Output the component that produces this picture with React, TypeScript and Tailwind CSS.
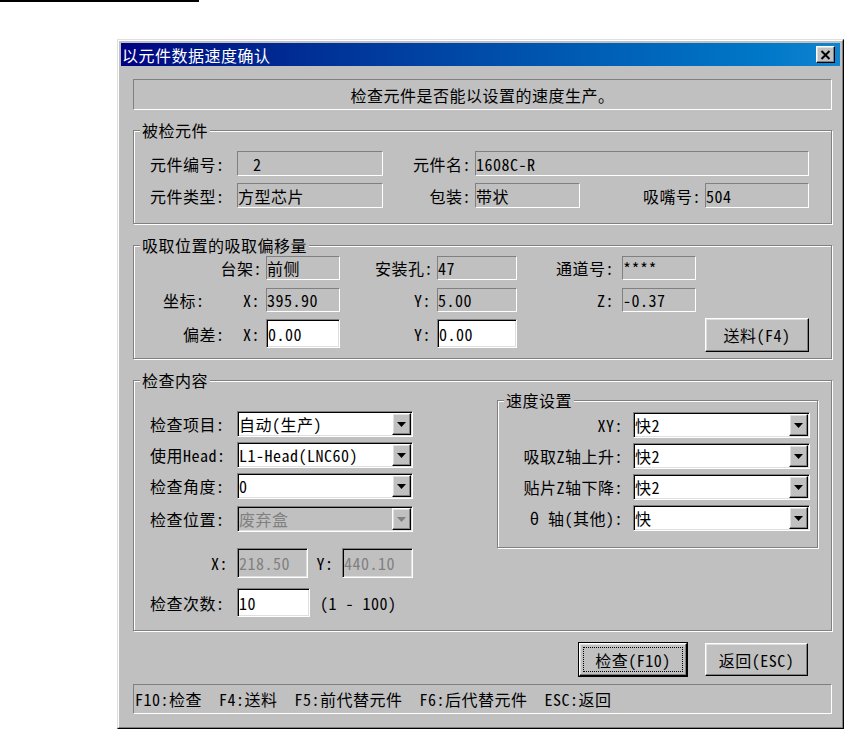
import type { ReactNode } from "react"

const raised =
  "border border-t-white border-l-white border-r-black border-b-black shadow-[inset_-1px_-1px_0_#808080,inset_1px_1px_0_#dfdfdf]"
const sunken =
  "border border-t-[#808080] border-l-[#808080] border-r-white border-b-white shadow-[inset_1px_1px_0_#000,inset_-1px_-1px_0_#dfdfdf]"
const staticEdge = "border border-t-[#808080] border-l-[#808080] border-r-white border-b-white"
const etched = "border border-[#808080] shadow-[inset_1px_1px_0_#fff,1px_1px_0_#fff]"

function Group({ title, className, children }: { title: string; className?: string; children: ReactNode }) {
  return (
    <div className={`relative ${etched} ${className ?? ""}`}>
      <span className="absolute -top-[11px] left-[6px] bg-[#c0c0c0] px-[2px] leading-[20px]">{title}</span>
      {children}
    </div>
  )
}

function Field({ value, className }: { value: string; className?: string }) {
  return <div className={`flex h-full items-center whitespace-pre ${staticEdge} ${className ?? ""}`}>{value}</div>
}

function Edit({ value, className, disabled }: { value: string; className?: string; disabled?: boolean }) {
  return (
    <div
      className={`flex items-center pl-[1px] ${sunken} ${disabled ? "bg-[#c0c0c0] text-[#808080]" : "bg-white"} ${className ?? ""}`}
    >
      {value}
    </div>
  )
}

function Combo({ value, className, disabled }: { value: string; className?: string; disabled?: boolean }) {
  return (
    <div
      className={`flex h-[26px] p-[1px] ${sunken} ${disabled ? "bg-[#c0c0c0] text-[#808080]" : "bg-white"} ${className ?? ""}`}
    >
      <span className="flex flex-1 items-center whitespace-nowrap">{value}</span>
      <div className={`flex w-[19px] items-center justify-center bg-[#c0c0c0] ${raised}`}>
        <svg width="9" height="5" viewBox="0 0 9 5">
          <path d="M0 0h9L4.5 5z" fill={disabled ? "#808080" : "#000"} />
        </svg>
      </div>
    </div>
  )
}

export default function App() {
  return (
    <div className="relative h-[730px] w-[846px] overflow-hidden bg-white text-[16px] leading-[20px] tracking-[0.5px] text-black [font-family:'Noto_Sans_Mono_CJK_SC','Noto_Sans_CJK_SC',sans-serif]">
      <div className="h-[2px] w-[199px] bg-black" />

      {/* dialog */}
      <div className="mt-[37px] ml-[117px] h-[690px] w-[727px] border border-t-[#dfdfdf] border-l-[#dfdfdf] border-r-black border-b-black bg-[#c0c0c0]">
        <div className="flex h-full flex-col border border-t-white border-l-white border-r-[#808080] border-b-[#808080] p-[2px]">
          {/* title bar */}
          <div className="flex h-[23px] items-center justify-between bg-linear-to-r from-[#000080] to-[#1084d0] pr-[5px] pl-[1px]">
            <span className="text-white">以元件数据速度确认</span>
            <div className={`flex h-[17px] w-[19px] items-center justify-center bg-[#c0c0c0] ${raised}`}>
              <svg width="11" height="10" viewBox="0 0 11 10">
                <path d="M1.5 1l8 8M9.5 1l-8 8" stroke="#000" strokeWidth="2" />
              </svg>
            </div>
          </div>

          <div className="flex flex-col pr-[8px] pl-[12px]">
            {/* message */}
            <div className={`mt-[13px] flex h-[31px] items-center justify-center ${staticEdge}`}>
              检查元件是否能以设置的速度生产。
            </div>

            {/* 被检元件 */}
            <Group title="被检元件" className="mt-[20px] h-[94px]">
              <div className="flex flex-col gap-[7px] pt-[20px]">
                <div className="flex h-[25px] items-center">
                  <span className="w-[103px] pl-[16px] whitespace-nowrap">元件编号:</span>
                  <Field value="2" className="w-[146px] pl-[15px]" />
                  <span className="w-[92px] pr-[4px] text-right whitespace-nowrap">元件名:</span>
                  <Field value="1608C-R" className="w-[334px]" />
                </div>
                <div className="flex h-[25px] items-center">
                  <span className="w-[103px] pl-[16px] whitespace-nowrap">元件类型:</span>
                  <Field value="方型芯片" className="w-[146px]" />
                  <span className="w-[92px] pr-[4px] text-right whitespace-nowrap">包装:</span>
                  <Field value="带状" className="w-[105px]" />
                  <span className="w-[125px] pr-[4px] text-right whitespace-nowrap">吸嘴号:</span>
                  <Field value="504" className="w-[104px]" />
                </div>
              </div>
            </Group>

            {/* 吸取位置的吸取偏移量 */}
            <Group title="吸取位置的吸取偏移量" className="mt-[21px] h-[114px]">
              <div className="flex flex-col pt-[10px]">
                <div className="flex h-[24px] items-center">
                  <span className="w-[132px] pr-[4px] text-right">台架:</span>
                  <Field value="前侧" className="w-[74px]" />
                  <span className="w-[97px] pr-[4px] text-right">安装孔:</span>
                  <Field value="47" className="w-[80px]" />
                  <span className="w-[105px] pr-[8px] text-right">通道号:</span>
                  <Field value="****" className="w-[74px]" />
                </div>
                <div className="mt-[8px] flex h-[24px] items-center">
                  <span className="flex w-[132px] justify-between pr-[6px] pl-[29px]">
                    <span>坐标:</span>
                    <span>X:</span>
                  </span>
                  <Field value="395.90" className="w-[74px]" />
                  <span className="w-[97px] pr-[6px] text-right">Y:</span>
                  <Field value="5.00" className="w-[80px]" />
                  <span className="w-[105px] pr-[8px] text-right">Z:</span>
                  <Field value="-0.37" className="w-[74px]" />
                </div>
                <div className="mt-[6px] flex h-[34px] items-start">
                  <span className="mt-[1px] flex h-[29px] w-[132px] items-center justify-between pr-[6px] pl-[49px]">
                    <span>偏差:</span>
                    <span>X:</span>
                  </span>
                  <Edit value="0.00" className="mt-[1px] h-[29px] w-[74px]" />
                  <span className="mt-[1px] flex h-[29px] w-[97px] items-center justify-end pr-[6px]">Y:</span>
                  <Edit value="0.00" className="mt-[1px] h-[29px] w-[80px]" />
                  <button className={`ml-[188px] h-[34px] w-[104px] bg-[#c0c0c0] ${raised}`}>送料(F4)</button>
                </div>
              </div>
            </Group>

            {/* 检查内容 */}
            <Group title="检查内容" className="mt-[21px] h-[251px]">
              <div className="flex">
                <div className="flex w-[363px] flex-col pt-[30px]">
                  <div className="flex h-[26px] items-center">
                    <span className="w-[103px] pl-[16px]">检查项目:</span>
                    <Combo value="自动(生产)" className="w-[176px]" />
                  </div>
                  <div className="mt-[5px] flex h-[26px] items-center">
                    <span className="w-[103px] pl-[16px] whitespace-nowrap">使用Head:</span>
                    <Combo value="L1-Head(LNC60)" className="w-[176px]" />
                  </div>
                  <div className="mt-[5px] flex h-[26px] items-center">
                    <span className="w-[103px] pl-[16px]">检查角度:</span>
                    <Combo value="0" className="w-[176px]" />
                  </div>
                  <div className="mt-[7px] flex h-[26px] items-center">
                    <span className="w-[103px] pl-[16px]">检查位置:</span>
                    <Combo value="废弃盒" className="w-[176px]" disabled />
                  </div>
                  <div className="mt-[16px] flex h-[30px] items-center">
                    <span className="w-[103px] pr-[9px] text-right">X:</span>
                    <Edit value="218.50" className="h-[30px] w-[71px]" disabled />
                    <span className="w-[34px] text-center">Y:</span>
                    <Edit value="440.10" className="h-[30px] w-[71px]" disabled />
                  </div>
                  <div className="mt-[10px] flex h-[29px] items-center">
                    <span className="w-[103px] pl-[16px]">检查次数:</span>
                    <Edit value="10" className="h-[29px] w-[73px]" />
                    <span className="ml-[10px] whitespace-pre">(1 - 100)</span>
                  </div>
                </div>

                <Group title="速度设置" className="mt-[19px] h-[148px] w-[321px]">
                  <div className="flex flex-col gap-[5px] pt-[11px]">
                    <div className="flex h-[26px] items-center">
                      <span className="w-[135px] pr-[10px] text-right">XY:</span>
                      <Combo value="快2" className="w-[177px]" />
                    </div>
                    <div className="flex h-[26px] items-center">
                      <span className="w-[135px] pr-[10px] text-right whitespace-nowrap">吸取Z轴上升:</span>
                      <Combo value="快2" className="w-[177px]" />
                    </div>
                    <div className="flex h-[26px] items-center">
                      <span className="w-[135px] pr-[10px] text-right whitespace-nowrap">贴片Z轴下降:</span>
                      <Combo value="快2" className="w-[177px]" />
                    </div>
                    <div className="flex h-[26px] items-center">
                      <span className="w-[135px] pr-[10px] text-right whitespace-pre">θ 轴(其他):</span>
                      <Combo value="快" className="w-[177px]" />
                    </div>
                  </div>
                </Group>
              </div>
            </Group>

            {/* buttons */}
            <div className="mt-[10px] flex h-[37px] items-center justify-end gap-[17px] pr-[24px]">
              <button className="h-[35px] w-[110px] border border-black bg-[#c0c0c0]">
                <div className={`flex h-full w-full items-center justify-center p-[3px] ${raised}`}>
                  <div className="flex h-full w-full items-center justify-center border border-dotted border-black">
                    检查(F10)
                  </div>
                </div>
              </button>
              <button className={`h-[33px] w-[103px] bg-[#c0c0c0] ${raised}`}>返回(ESC)</button>
            </div>

            {/* status */}
            <div className={`mt-[6px] flex h-[30px] items-center pl-[1px] whitespace-pre ${staticEdge}`}>
              F10:检查  F4:送料  F5:前代替元件  F6:后代替元件  ESC:返回
            </div>
          </div>
        </div>
      </div>
    </div>
  )
}
